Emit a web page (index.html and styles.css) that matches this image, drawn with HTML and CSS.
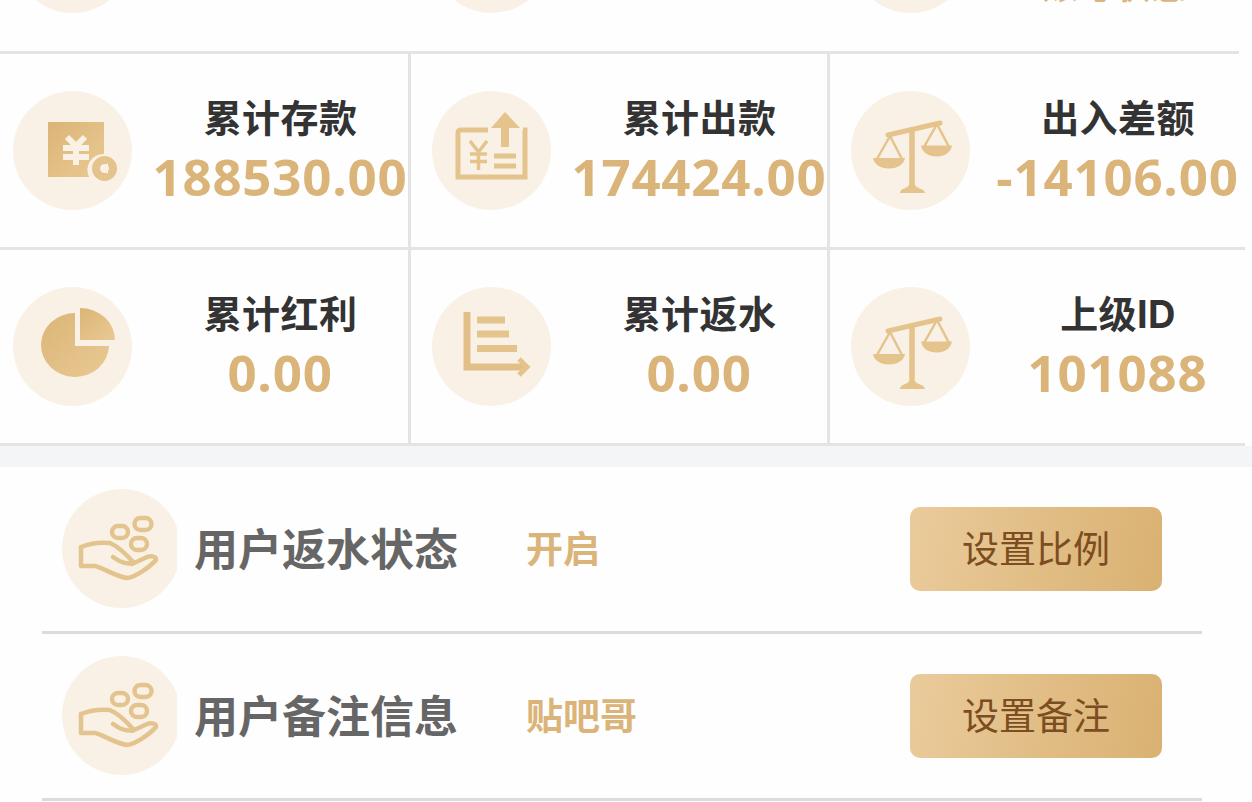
FILE: index.html
```html
<!DOCTYPE html>
<html lang="zh-CN">
  <head>
    <meta charset="UTF-8" />
    <meta name="viewport" content="width=device-width, initial-scale=1.0" />
    <title>用户详情</title>
    <link rel="stylesheet" href="styles.css">
  </head>
  <body>
    <svg class="defs" width="0" height="0">
      <defs>
        <linearGradient id="gold" x1="0" y1="0" x2="1" y2="1">
          <stop offset="0" stop-color="#dbb577" />
          <stop offset="1" stop-color="#e9c993" />
        </linearGradient>
        <symbol id="scales" viewBox="0 0 119 119">
          <g fill="none" stroke="#e4c38c">
            <path d="M37 44 L89 32" stroke-width="5" stroke-linecap="round" />
            <path d="M61 37 V98" stroke-width="5.5" />
            <path d="M39 45 L26 68 M39 45 L51 68 M86 33 L73 56 M86 33 L98 56" stroke-width="2.5" />
          </g>
          <path fill="#e4c38c" d="M22 67 H54 C53 73 47 77.500 38 77.500 C29 77.500 23 73 22 67 Z M70 54.500 H101 C100 61 94 65.500 86 65.500 C77 65.500 71 61 70 54.500 Z M49 102 C49 97 56 98 58 94 H64 C66 98 73 97 74 102 Z" />
        </symbol>
        <symbol id="hand" viewBox="0 0 119 119">
          <g fill="none" stroke="#e4c48e" stroke-width="4.500" stroke-linejoin="round" stroke-linecap="round">
            <path d="M19 58 V77 H33 C42 79 52 87 65 89 C73 88 87 79 94 71 C95 67 88 66 83 69 L70 75" />
            <path d="M19 58 C29 54 38 53 48 54 C57 58 64 65 71 73 C67 76 59 74 51 68" />
            <rect x="50" y="37" width="16" height="12" rx="6" />
            <rect x="72.500" y="29" width="17" height="12" rx="6" />
            <rect x="69" y="49" width="16" height="12" rx="6" />
          </g>
        </symbol>
      </defs>
    </svg>

    <div class="stats">
      <div class="card first">
        <div class="icon"></div>
      </div>
      <div class="card first">
        <div class="icon"></div>
      </div>
      <div class="card first last">
        <div class="icon"></div>
        <div class="info"><p class="status">账号状态</p></div>
      </div>

      <div class="card">
        <div class="icon">
          <svg viewBox="0 0 119 119">
            <path d="M35 31 H91 V63 A16 16 0 0 0 76 86 H35 Z" fill="url(#gold)" />
            <path d="M54 46 L63 55 L72 46 M63 55 V74 M50 57 H76 M50 66 H76" fill="none" stroke="#faf1e6" stroke-width="6" />
            <circle cx="91.500" cy="77.500" r="8.500" fill="none" stroke="#e4c38c" stroke-width="8" />
            <path d="M95 72 L88 77.500 L95 83 Z" fill="#faf1e6" />
          </svg>
        </div>
        <div class="info">
          <h3>累计存款</h3>
          <p class="num">188530.00</p>
        </div>
      </div>
      <div class="card">
        <div class="icon">
          <svg viewBox="0 0 119 119">
            <path d="M56 39 H29 Q26 39 26 42 V86 H93 V39 H91" fill="none" stroke="#e4c38c" stroke-width="5" />
            <path d="M73 21 L88 37 H77 V56 H69 V37 H59 Z" fill="#e4c38c" />
            <path d="M38 50 L46.500 61 L55 50 M46.500 61 V79 M38 63 H55 M38 70.500 H55" fill="none" stroke="#e4c38c" stroke-width="3.500" />
            <path d="M62 65 H84 M62 75 H84" stroke="#e4c38c" stroke-width="5" />
          </svg>
        </div>
        <div class="info">
          <h3>累计出款</h3>
          <p class="num">174424.00</p>
        </div>
      </div>
      <div class="card last">
        <div class="icon"><svg><use href="#scales" /></svg></div>
        <div class="info">
          <h3>出入差额</h3>
          <p class="num">-14106.00</p>
        </div>
      </div>

      <div class="card">
        <div class="icon">
          <svg viewBox="0 0 119 119">
            <path d="M62 26 A34 32 0 1 0 96 59 H62 Z" fill="url(#gold)" />
            <path d="M67 21 A35 32 0 0 1 102 53 H67 Z" fill="url(#gold)" />
          </svg>
        </div>
        <div class="info">
          <h3>累计红利</h3>
          <p class="num">0.00</p>
        </div>
      </div>
      <div class="card">
        <div class="icon">
          <svg viewBox="0 0 119 119">
            <path d="M35 25 V80 H92" fill="none" stroke="#e2bf86" stroke-width="7" />
            <path d="M45 33 H73 M45 47 H77 M45 61.500 H85" stroke="#e4c38c" stroke-width="7" />
            <path d="M87 72 L95 80 L87 88" fill="none" stroke="#e4c38c" stroke-width="5" />
          </svg>
        </div>
        <div class="info">
          <h3>累计返水</h3>
          <p class="num">0.00</p>
        </div>
      </div>
      <div class="card last">
        <div class="icon"><svg><use href="#scales" /></svg></div>
        <div class="info">
          <h3>上级ID</h3>
          <p class="num">101088</p>
        </div>
      </div>
    </div>

    <div class="settings">
      <div class="row">
        <div class="row-icon"><div class="icon"><svg><use href="#hand" /></svg></div></div>
        <span class="label">用户返水状态</span>
        <span class="value">开启</span>
        <button type="button" class="btn">设置比例</button>
      </div>
      <div class="row">
        <div class="row-icon"><div class="icon"><svg><use href="#hand" /></svg></div></div>
        <span class="label">用户备注信息</span>
        <span class="value">贴吧哥</span>
        <button type="button" class="btn">设置备注</button>
      </div>
    </div>
  </body>
</html>
```
FILE: styles.css
```css
* {
  margin: 0;
  padding: 0;
  box-sizing: border-box;
}

body {
  height: 802px;
  overflow: hidden;
  font-family: "Noto Sans CJK SC", sans-serif;
  background-color: #fefefe;
  color: #333;
}

.defs {
  display: block;
}

.stats {
  display: grid;
  grid-template-columns: 411px 419px 415px;
  grid-template-rows: 54px 196px 196px;
}

.card {
  display: flex;
  align-items: flex-start;
  padding: 37px 0 0 13px;
  border-right: 3px solid #e4e4e4;
  border-bottom: 3px solid #e4e4e4;
}

.card:nth-child(3n + 2) {
  padding-left: 21px;
}

.card.last {
  padding-left: 21px;
  border-right: none;
}

.card.first {
  align-items: flex-end;
  padding-top: 0;
  padding-bottom: 38px;
  border-right: none;
}

.card.first.last {
  margin-right: 6px;
}

.icon {
  flex: none;
  width: 119px;
  height: 119px;
  border-radius: 50%;
  background-color: #faf1e6;
}

.icon svg {
  display: block;
  width: 119px;
  height: 119px;
}

.info {
  flex: 1;
  display: flex;
  flex-direction: column;
  align-items: center;
  min-width: 0;
  margin-left: 20px;
  white-space: nowrap;
}

h3 {
  padding-left: 1px;
  font-family: Inter, "Noto Sans CJK SC", sans-serif;
  font-size: 38px;
  line-height: 54px;
  font-weight: 700;
  letter-spacing: 0.4px;
}

.num {
  font-family: "Open Sans", "Noto Sans", sans-serif;
  font-size: 51px;
  line-height: 62px;
  font-weight: 700;
  letter-spacing: 0.8px;
  color: #dab478;
}

.status {
  margin-bottom: 11px;
  font-size: 36px;
  line-height: 37px;
  font-weight: 700;
  color: #dab478;
}

.settings {
  padding: 0 50px 0 42px;
  border-top: 21px solid #f4f5f7;
}

.row {
  display: flex;
  align-items: center;
  height: 167px;
  padding: 0 40px 1px 20px;
  border-bottom: 3px solid #dcdcdc;
}

.row-icon {
  flex: none;
  width: 115px;
  overflow: hidden;
}

.label {
  width: 332px;
  margin-left: 17px;
  padding-bottom: 3px;
  font-size: 44px;
  font-weight: 700;
  color: #666;
}

.value {
  padding-bottom: 4px;
  font-size: 37px;
  font-weight: 700;
  color: #dab478;
}

.btn {
  width: 252px;
  height: 84px;
  margin-left: auto;
  padding-bottom: 4px;
  border: none;
  border-radius: 10px;
  background: linear-gradient(100deg, #eacb9b, #d9b172);
  color: #7c4d20;
  font-family: inherit;
  font-size: 37px;
  cursor: pointer;
}
```
